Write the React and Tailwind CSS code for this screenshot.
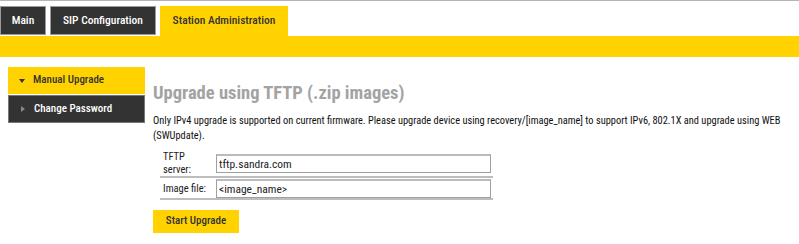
const Y = "bg-[#ffd200]";

function Tab({ label, active, width }) {
  return (
    <div
      className={
        "flex items-center justify-center text-[11.5px] font-medium border " +
        width +
        " " +
        (active ? Y + " h-[30px] border-[#ffd200] text-[#333]" : "bg-[#333] h-[29px] border-[#9a9a9a] text-white")
      }
    >
      {label}
    </div>
  );
}

function Row({ label, value, tall }) {
  return (
    <div className={"flex items-center border-b-2 border-[#bdbdbd] " + (tall ? "h-[28px]" : "h-[22px]")}>
      <div className="w-[56px] pl-[3px] text-[10.5px] leading-[13px] text-[#222]">{label}</div>
      <input
        defaultValue={value}
        className="w-[275px] h-[19px] px-[2px] text-[11.5px] text-[#222] border border-[#a0a0a0] border-t-2 border-t-[#bbb] outline-none"
      />
    </div>
  );
}

export default function App() {
  return (
    <div className="w-[799px] h-[244px] bg-white font-['Roboto_Condensed',sans-serif] border-t border-[#b4b4b4] overflow-hidden">
      <div className="flex items-start gap-[4px] pt-[5px]">
        <Tab label="Main" width="w-[46px]" />
        <Tab label="SIP Configuration" width="w-[106px]" />
        <Tab label="Station Administration" width="w-[128px]" active />
      </div>
      <div className={Y + " h-[21px]"} />

      <div className="flex pl-[8px] pt-[10px]">
        <div className="w-[137px] shrink-0">
          <div className={Y + " h-[27px] flex items-center pl-[11px] text-[11px] font-medium text-[#333]"}>
            <span className="w-0 h-0 border-l-[3px] border-r-[3px] border-t-[4px] border-l-transparent border-r-transparent border-t-[#333]" />
            <span className="ml-[8px]">Manual Upgrade</span>
          </div>
          <div className="mt-px bg-[#333] h-[28px] border border-[#777] flex items-center pl-[12px] text-[11px] font-medium text-white">
            <span className="w-0 h-0 border-t-[3px] border-b-[3px] border-l-[4px] border-t-transparent border-b-transparent border-l-[#888]" />
            <span className="ml-[9px]">Change Password</span>
          </div>
        </div>

        <div className="ml-[8px] flex-1 min-w-0 pr-[8px]">
          <h1 className="mt-[14px] text-[18.5px] leading-[24px] font-bold text-[#a3a3a3]">
            Upgrade using TFTP (.zip images)
          </h1>
          <p className="mt-[8px] text-[10.4px] leading-[15px] text-[#111]">
            Only IPv4 upgrade is supported on current firmware. Please upgrade device using recovery/[image_name] to support
            IPv6, 802.1X and upgrade using WEB (SWUpdate).
          </p>
          <div className="mt-[7px] ml-[7px] w-[333px]">
            <Row
              tall
              label={
                <>
                  TFTP
                  <br />
                  server:
                </>
              }
              value="tftp.sandra.com"
            />
            <Row label="Image file:" value="<image_name>" />
          </div>
          <button className={Y + " mt-[10px] w-[86px] h-[23px] text-[11px] font-medium text-[#333]"}>Start Upgrade</button>
        </div>
      </div>
    </div>
  );
}
